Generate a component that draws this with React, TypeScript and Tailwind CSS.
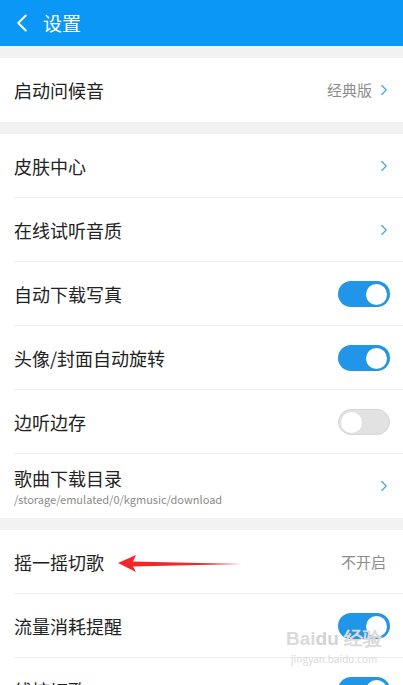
import { ChevronLeft, ChevronRight } from "lucide-react";

type Row =
  | { kind: "link"; title: string; value?: string; sub?: string }
  | { kind: "toggle"; title: string; on: boolean; hint?: string }
  | { kind: "text"; title: string; value: string };

const groups: Row[][] = [
  [{ kind: "link", title: "启动问候音", value: "经典版" }],
  [
    { kind: "link", title: "皮肤中心" },
    { kind: "link", title: "在线试听音质" },
    { kind: "toggle", title: "自动下载写真", on: true },
    { kind: "toggle", title: "头像/封面自动旋转", on: true },
    { kind: "toggle", title: "边听边存", on: false },
    { kind: "link", title: "歌曲下载目录", sub: "/storage/emulated/0/kgmusic/download" },
  ],
  [
    { kind: "text", title: "摇一摇切歌", value: "不开启" },
    { kind: "toggle", title: "流量消耗提醒", on: true },
    { kind: "toggle", title: "线控切歌", on: true, hint: "如何操作" },
  ],
];

function Toggle({ on }: { on: boolean }) {
  return on ? (
    <div className="flex h-[26px] w-[52px] items-center justify-end rounded-full bg-[#2196e9] pr-[3px]">
      <div className="h-[21px] w-[21px] rounded-full bg-white" />
    </div>
  ) : (
    <div className="flex h-[26px] w-[52px] items-center rounded-full border border-[#d6d6d6] bg-[#e2e2e2] pl-[2px]">
      <div className="h-[21px] w-[21px] rounded-full bg-white" />
    </div>
  );
}

function SettingRow({ row, last }: { row: Row; last: boolean }) {
  return (
    <div className="relative flex h-[64px] items-center pl-[14px] pr-[13px]">
      <div className="flex flex-1 flex-col">
        <div className="flex items-baseline gap-3">
          <span className="text-[18px] leading-[24px] text-[#222]">{row.title}</span>
          {row.kind === "toggle" && row.hint && <span className="text-[14px] text-[#2b9bea]">{row.hint}</span>}
        </div>
        {row.kind === "link" && row.sub && (
          <span className="mt-[2px] text-[11px] leading-[14px] text-[#8a8a8a]">{row.sub}</span>
        )}
      </div>
      {row.kind === "link" && (
        <div className="flex items-center gap-[3px]">
          {row.value && <span className="text-[15px] text-[#8c8c8c]">{row.value}</span>}
          <ChevronRight size={18} strokeWidth={1.5} className="-mr-[3px] text-[#3aa5ee]" />
        </div>
      )}
      {row.kind === "text" && <span className="mr-[4px] text-[15px] text-[#8c8c8c]">{row.value}</span>}
      {row.kind === "toggle" && <Toggle on={row.on} />}
      {!last && <div className="absolute bottom-0 left-[14px] right-0 h-px bg-[#ededed]" />}
    </div>
  );
}

export default function App() {
  return (
    <div
      className="relative h-[685px] w-[403px] overflow-hidden bg-[#f2f2f2]"
      style={{ fontFamily: '"Noto Sans CJK SC", "Noto Sans", sans-serif' }}
    >
      <div className="flex h-[46px] items-center bg-[#0b97f6] pl-[7px] text-white">
        <ChevronLeft size={30} strokeWidth={1.6} />
        <span className="ml-[6px] text-[19px]">设置</span>
      </div>
      <div className="flex flex-col gap-[12px] pt-[12px]">
        {groups.map((g, gi) => (
          <div key={gi} className="bg-white">
            {g.map((row, ri) => (
              <SettingRow key={row.title} row={row} last={ri === g.length - 1} />
            ))}
          </div>
        ))}
      </div>

      {/* red annotation arrow */}
      <svg className="absolute left-[116px] top-[553px]" width="130" height="22" viewBox="0 0 130 22">
        <path d="M2 10 L20 2 L17 8.5 L126 11 L17 13.5 L20 19 Z" fill="#f2262b" />
      </svg>

      {/* watermark */}
      <div className="absolute left-[286px] top-[628px] flex flex-col items-center text-[#dadada]">
        <span className="text-[19px] font-bold leading-[22px]" style={{ fontFamily: '"Liberation Sans", sans-serif' }}>
          Bai<span className="text-[#d2d2d2]">du</span> 经验
        </span>
        <span className="mt-[3px] text-[10px] leading-[12px]">jingyan.baidu.com</span>
      </div>
    </div>
  );
}
